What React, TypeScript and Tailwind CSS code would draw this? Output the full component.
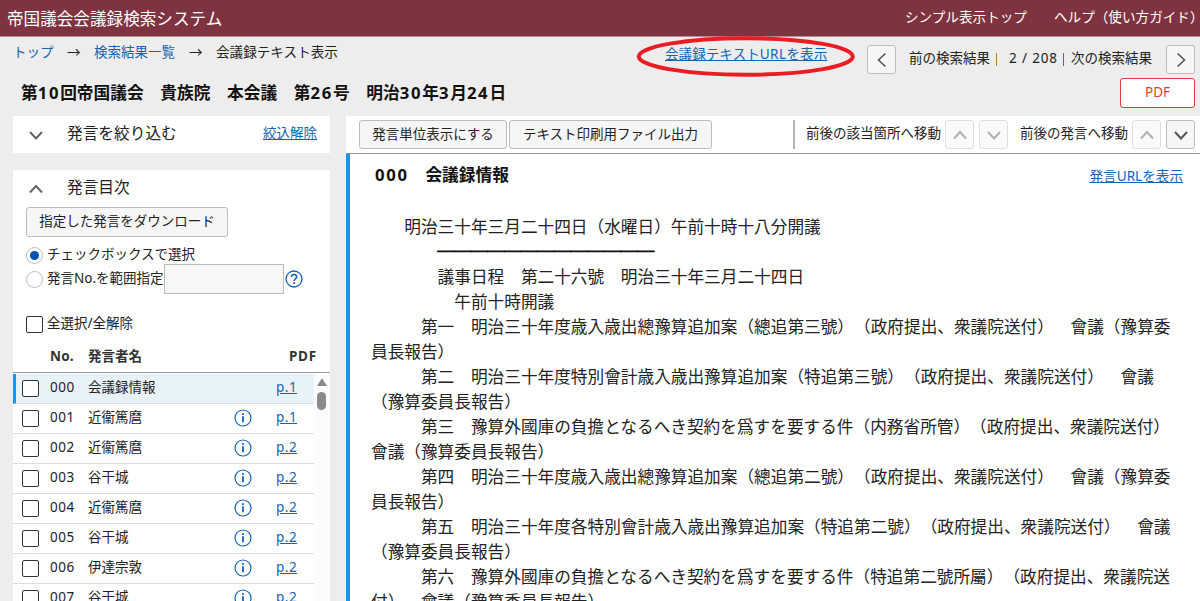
import { useState } from "react";
import clsx from "clsx";

interface Speech {
    no: string
    name: string
    page: string
    info: boolean
}

const speeches: Speech[] = [
    { no: "000", name: "会議録情報", page: "p.1", info: false },
    { no: "001", name: "近衞篤麿", page: "p.1", info: true },
    { no: "002", name: "近衞篤麿", page: "p.2", info: true },
    { no: "003", name: "谷干城", page: "p.2", info: true },
    { no: "004", name: "近衞篤麿", page: "p.2", info: true },
    { no: "005", name: "谷干城", page: "p.2", info: true },
    { no: "006", name: "伊達宗敦", page: "p.2", info: true },
    { no: "007", name: "谷干城", page: "p.2", info: true },
];

const RULE = "　　　　─────────────";

const minutes = [
    "　　明治三十年三月二十四日（水曜日）午前十時十八分開議",
    RULE,
    "　　　　議事日程　第二十六號　明治三十年三月二十四日",
    "　　　　　午前十時開議",
    "　　　第一　明治三十年度歳入歳出總豫算追加案（總追第三號）（政府提出、衆議院送付）　會議（豫算委",
    "員長報告）",
    "　　　第二　明治三十年度特別會計歳入歳出豫算追加案（特追第三號）（政府提出、衆議院送付）　會議",
    "（豫算委員長報告）",
    "　　　第三　豫算外國庫の負擔となるへき契約を爲すを要する件（内務省所管）（政府提出、衆議院送付）",
    "會議（豫算委員長報告）",
    "　　　第四　明治三十年度歳入歳出總豫算追加案（總追第二號）（政府提出、衆議院送付）　會議（豫算委",
    "員長報告）",
    "　　　第五　明治三十年度各特別會計歳入歳出豫算追加案（特追第二號）（政府提出、衆議院送付）　會議",
    "（豫算委員長報告）",
    "　　　第六　豫算外國庫の負擔となるへき契約を爲すを要する件（特追第二號所屬）（政府提出、衆議院送",
    "付）　會議（豫算委員長報告）",
];

const chevrons = {
    up: "M2 11.5 L8 5 L14 11.5",
    down: "M2 5 L8 11.5 L14 5",
    left: "M11.5 1.5 L4.5 8 L11.5 14.5",
    right: "M4.5 1.5 L11.5 8 L4.5 14.5",
};

function Chevron({ dir, className }: { dir: keyof typeof chevrons, className?: string }) {
    return (
        <svg viewBox="0 0 16 16" fill="none" stroke="currentColor" className={clsx("size-4", className)}>
            <path d={chevrons[dir]} strokeWidth={dir === "left" || dir === "right" ? 1.6 : 2} />
        </svg>
    );
}

function IconButton({ dir, disabled }: { dir: keyof typeof chevrons, disabled?: boolean }) {
    return (
        <button
            disabled={disabled}
            className={clsx(
                "flex h-[29px] w-[29px] shrink-0 items-center justify-center rounded-[3px] border",
                disabled ? "border-[#dfdfdf] bg-[#fafafa] text-[#b0b0b0]" : "border-[#bcbcbc] bg-[#f6f6f6] text-[#555]"
            )}
        >
            <Chevron dir={dir} />
        </button>
    );
}

function InfoIcon() {
    return (
        <svg viewBox="0 0 18 18" fill="none" stroke="#1464b4" className="size-[18px]">
            <circle cx="9" cy="9" r="8" strokeWidth={1.2} />
            <path d="M9 7.3V13.3" strokeWidth={1.8} />
            <path d="M9 4.2V6" strokeWidth={1.8} />
        </svg>
    );
}

function HelpIcon() {
    return (
        <svg viewBox="0 0 18 18" fill="none" stroke="#1464b4" className="size-[18px] shrink-0">
            <circle cx="9" cy="9" r="8" strokeWidth={1.3} />
            <path d="M6.4 7C6.4 3.6 11.7 3.7 11.7 6.9C11.7 8.8 9.2 8.7 9.2 11" strokeWidth={1.6} />
            <path d="M9.2 12.2V14" strokeWidth={1.8} />
        </svg>
    );
}

function Checkbox() {
    return <span className="h-[17px] w-[17px] shrink-0 rounded-[2px] border border-[#333] bg-white" />;
}

function Radio({ checked, onClick }: { checked: boolean, onClick: () => void }) {
    return (
        <button onClick={onClick} className="flex size-[17px] shrink-0 items-center justify-center rounded-full border border-[#bdbdbd] bg-white">
            {checked && <span className="size-[9px] rounded-full bg-[#0052ae]" />}
        </button>
    );
}

// Headings set their digits a little wider than the kanji around them
function Heading({ text }: { text: string }) {
    return (
        <h2 className="text-[16.7px] leading-[25px] font-bold text-[#111]">
            {text.split(/(\d+)/).map((part, i) => (
                <span key={i} className={i % 2 ? "tracking-[1.7px]" : ""}>{part}</span>
            ))}
        </h2>
    );
}

function Sidebar() {
    const [mode, setMode] = useState<"check" | "range">("check");

    return (
        <div className="flex w-[317px] shrink-0 flex-col gap-[17px]">
            {/* Filter */}
            <div className="flex h-[37px] shrink-0 items-center bg-white pr-[13px] pl-[15px]">
                <Chevron dir="down" className="text-[#666]" />
                <span className="ml-[23px] pb-1 text-[15.7px]">発言を絞り込む</span>
                <a className="ml-auto pb-1 text-[#1464b4] underline">絞込解除</a>
            </div>

            {/* Contents */}
            <div className="flex grow flex-col bg-white">
                <div className="flex h-[37px] shrink-0 items-center pl-[15px]">
                    <Chevron dir="up" className="text-[#666]" />
                    <span className="ml-[23px] pb-1 text-[15.7px]">発言目次</span>
                </div>
                <button className="ml-[13px] h-[30px] w-[202px] shrink-0 rounded-[3px] border border-[#bcbcbc] bg-[#f6f6f6] pb-0.5">
                    指定した発言をダウンロード
                </button>
                <div className="mt-[9px] ml-[13px] flex h-[19px] shrink-0 items-center">
                    <Radio checked={mode === "check"} onClick={() => setMode("check")} />
                    <span className="ml-1 pb-1">チェックボックスで選択</span>
                </div>
                <div className="-mt-px ml-[13px] flex h-[30px] shrink-0 items-center">
                    <Radio checked={mode === "range"} onClick={() => setMode("range")} />
                    <span className="ml-1 w-[117px] pb-0.5">発言No.を範囲指定</span>
                    <span className="mr-px h-[30px] w-[120px] border border-[#bcbcbc] bg-[#f8f8f8]" />
                    <HelpIcon />
                </div>
                <div className="mt-[21px] ml-[13px] flex h-[18px] shrink-0 items-center">
                    <Checkbox />
                    <span className="ml-1 pb-0.5">全選択/全解除</span>
                </div>
                <div className="mt-2.5 flex h-[30px] shrink-0 items-center border-b border-[#999] pr-[13px] pb-[3px] pl-[37px] font-bold text-[#333]">
                    <span className="w-[38px] tracking-[0.2px]">No.</span>
                    <span>発言者名</span>
                    <span className="ml-auto tracking-[0.8px]">PDF</span>
                </div>

                <div className="flex grow pt-px">
                    <div className="w-[301px]">
                        {speeches.map((speech, i) => (
                            <div
                                key={speech.no}
                                className={clsx(
                                    "flex h-[30px] items-center border-b border-[#ddd]",
                                    i === 0 ? "border-l-[3px] border-l-[#1a94e6] bg-[#e8f2f9] pl-1.5" : "pl-[9px]"
                                )}
                            >
                                <Checkbox />
                                <span className="ml-[11px] w-[38px] pb-1 tracking-[0.5px]">{speech.no}</span>
                                <span className="w-[146px] pb-1">{speech.name}</span>
                                <span className="w-[42px] pb-px">{speech.info && <InfoIcon />}</span>
                                <a className="pb-1 tracking-[0.5px] text-[#1464b4] underline">{speech.page}</a>
                            </div>
                        ))}
                    </div>
                    {/* Scroll bar */}
                    <div className="flex w-4 flex-col items-center bg-[#fcfcfc] pt-1 pr-px">
                        <svg viewBox="0 0 10 8" className="h-2 w-2.5 shrink-0" fill="#8b8b8b">
                            <path d="M5 0 L10 8 H0 Z" />
                        </svg>
                        <div className="mt-1.5 h-[18px] w-[9px] shrink-0 rounded-full bg-[#8b8b8b]" />
                    </div>
                </div>
            </div>
        </div>
    );
}

function Minutes() {
    return (
        <div className="flex w-[854px] shrink-0 flex-col bg-white">
            <div className="flex h-[38px] shrink-0 items-center border-b border-[#999] pl-[13px]">
                <button className="h-[29px] w-[148px] rounded-[3px] border border-[#bcbcbc] bg-[#f6f6f6] pb-0.5">発言単位表示にする</button>
                <button className="ml-0.5 h-[29px] w-[203px] rounded-[3px] border border-[#bcbcbc] bg-[#f6f6f6] pb-0.5">テキスト印刷用ファイル出力</button>
                <div className="ml-[81px] flex h-[29px] items-center border-l-2 border-[#b5b5b5] pl-[11px]">
                    <span className="w-[139px] pb-1">前後の該当箇所へ移動</span>
                    <IconButton dir="up" disabled />
                    <span className="w-[5px]" />
                    <IconButton dir="down" disabled />
                    <span className="ml-3 w-[112px] pb-1">前後の発言へ移動</span>
                    <IconButton dir="up" disabled />
                    <span className="w-[5px]" />
                    <IconButton dir="down" />
                </div>
            </div>

            <div className="grow border-l-4 border-[#1a94e6] pl-[21px]">
                <div className="flex h-[60px] items-start justify-between pt-2 pr-[17px] pl-1">
                    <Heading text="000　会議録情報" />
                    <a className="pt-px text-[13.6px] leading-[25px] text-[#1464b4] underline">発言URLを表示</a>
                </div>
                <div className="text-[16.67px] leading-[25px] text-[#222]">
                    {minutes.map((line, i) => (
                        <p key={i} className={line === RULE ? "[-webkit-text-stroke:1px_#111]" : ""}>{line}</p>
                    ))}
                </div>
            </div>
        </div>
    );
}

export default function App() {
    return (
        <div className="flex h-[601px] w-[1200px] flex-col overflow-hidden bg-[#ededed] font-['Noto_Sans','Noto_Sans_CJK_JP',sans-serif] text-[13.5px] leading-5 whitespace-pre text-[#222] [text-spacing-trim:space-all]" lang="ja">
            <header className="flex h-[37px] shrink-0 items-center border-b border-[#b98a92] bg-[#7f3340] pl-[7px] text-white">
                <h1 className="w-[898px] shrink-0 pt-px text-[16.6px]">帝国議会会議録検索システム</h1>
                <span className="w-[149px] shrink-0 pb-[3px] text-[13.6px]">シンプル表示トップ</span>
                <span className="shrink-0 pb-[3px] text-[13.6px]">ヘルプ（使い方ガイド）</span>
            </header>

            {/* Breadcrumbs and result navigation */}
            <div className="flex h-[41px] shrink-0 items-start pl-[13px]">
                <nav className="flex w-[652px] items-center pt-[5px]">
                    <a className="w-[54px] text-[#1464b4]">トップ</a>
                    <span className="w-[27px]">→</span>
                    <a className="w-[95px] text-[#1464b4]">検索結果一覧</a>
                    <span className="w-[27px]">→</span>
                    <span className="text-[13.6px]">会議録テキスト表示</span>
                </nav>
                <div className="relative w-[202px] pt-[7px]">
                    <a className="text-[13.6px] text-[#1464b4] underline">会議録テキスト<span className="tracking-[0.4px]">URL</span>を表示</a>
                    <svg viewBox="0 0 220 42" className="absolute -top-px -left-[29px] h-[42px] w-[220px]" fill="none" stroke="#ed1c24" strokeWidth={4}>
                        <ellipse cx="109.8" cy="20.5" rx="107" ry="18.2" />
                    </svg>
                </div>
                <div className="flex items-center pt-2">
                    <IconButton dir="left" />
                    <span className="ml-[13px] w-[81px] pb-[3px]">前の検索結果</span>
                    <span className="ml-[6px] h-[13px] w-px bg-[#b07c3c]" />
                    <span className="ml-3 w-[54px] pb-[3px] tracking-[0.85px]">2 / 208</span>
                    <span className="h-[13px] w-px bg-[#666]" />
                    <span className="ml-[7px] w-[95px] pb-[3px]">次の検索結果</span>
                    <IconButton dir="right" />
                </div>
            </div>

            <div className="flex h-[38px] shrink-0 items-start justify-between pr-[5px] pl-[21px]">
                <div className="pt-0.5">
                    <Heading text="第10回帝国議会　貴族院　本会議　第26号　明治30年3月24日" />
                </div>
                <button className="h-[30px] w-[75px] rounded-[3px] border border-[#e03c3c] bg-white pb-0.5 text-[#e03c3c]">PDF</button>
            </div>

            <div className="flex min-h-0 grow gap-4 overflow-hidden pl-[13px]">
                <Sidebar />
                <Minutes />
            </div>
        </div>
    );
}
